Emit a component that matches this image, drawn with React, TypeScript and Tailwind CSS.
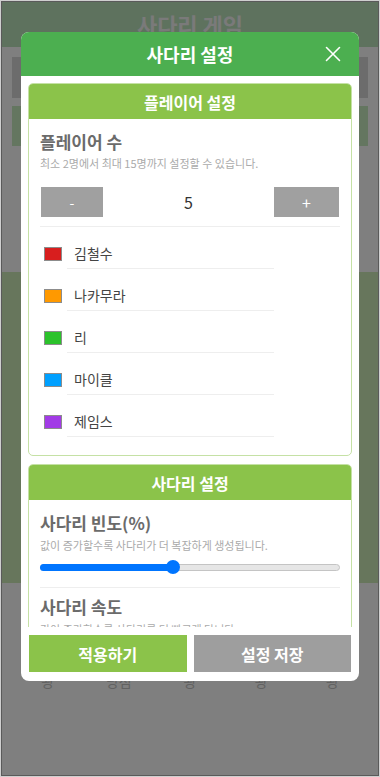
import React from "react";

const players = [
  { name: "김철수", color: "#d81e1e" },
  { name: "나카무라", color: "#ff9900" },
  { name: "리", color: "#2bc22b" },
  { name: "마이클", color: "#00a0ff" },
  { name: "제임스", color: "#a23be6" },
];

const results = ["꽝", "당첨", "꽝", "꽝", "꽝"];

function CloseIcon() {
  return (
    <svg width="16" height="16" viewBox="0 0 16 16" fill="none">
      <path d="M1.5 1.5 L14.5 14.5 M14.5 1.5 L1.5 14.5" stroke="#ffffff" strokeWidth="1.6" strokeLinecap="round" />
    </svg>
  );
}

export default function App() {
  return (
    <div
      className="relative w-[380px] h-[777px] overflow-hidden border border-[#cfcfcf] bg-white"
      style={{ fontFamily: '"Noto Sans CJK KR", "Noto Sans", sans-serif' }}
    >
      {/* background page */}
      <div className="h-full border border-[#b4b4b4] flex flex-col bg-white">
        <div className="h-[45px] bg-[#bce4bc] flex items-center justify-center text-[22px] font-bold text-[#f4f4f4]">
          사다리 게임
        </div>
        <div className="mt-[10px] mx-[10px] h-[41px] bg-[#d8d8d8]" />
        <div className="mt-[8px] mx-[10px] h-[40px] bg-[#c8ecc0]" />
        <div className="mt-[126px] h-[311px] bg-[#ceecb8]" />
        <div className="mt-[88px] mx-[10px] grid grid-cols-5 text-center text-[14px] leading-[20px] text-[#c4c4c4]">
          {results.map((r, i) => (
            <div key={i}>{r}</div>
          ))}
        </div>
      </div>

      {/* overlay */}
      <div className="absolute inset-0 bg-black/50 flex justify-center pt-[31px]">
        <div className="w-[338px] h-[649px] bg-white rounded-[8px] overflow-hidden flex flex-col">
          <div className="relative h-[44px] shrink-0 bg-[#4caf50] flex items-center justify-center">
            <span className="text-white text-[18px] font-bold">사다리 설정</span>
            <button className="absolute right-[18px] top-[14px]">
              <CloseIcon />
            </button>
          </div>

          <div className="flex-1 overflow-hidden px-[7px] pt-[7px]">
            {/* Player card */}
            <div className="border border-[#c5e1a5] rounded-[5px] overflow-hidden">
              <div className="h-[35px] bg-[#8bc34a] flex items-center justify-center text-white text-[16px] font-bold">
                플레이어 설정
              </div>
              <div className="px-[11px] pt-[12px] pb-[18px]">
                <div className="text-[17px] leading-[22px] font-bold text-[#6b6b6b]">플레이어 수</div>
                <div className="mt-[2px] text-[11px] leading-[16px] text-[#aaaaaa]">
                  최소 2명에서 최대 15명까지 설정할 수 있습니다.
                </div>
                <div className="mt-[16px] flex items-center">
                  <div className="ml-[1px] w-[62px] h-[30px] bg-[#a0a0a0] text-white text-[14px] flex items-center justify-center">
                    -
                  </div>
                  <div className="flex-1 text-center text-[16px] text-[#333333]">5</div>
                  <div className="mr-[1px] w-[65px] h-[30px] bg-[#a0a0a0] text-white text-[16px] flex items-center justify-center">
                    +
                  </div>
                </div>
                <div className="mt-[9px] h-px bg-[#eeeeee]" />
                <div className="flex flex-col gap-[12px] mt-[12px]">
                  {players.map((p) => (
                    <div key={p.name} className="flex items-center">
                      <div
                        className="ml-[4px] w-[18px] h-[14px] border border-[#8c8c8c]"
                        style={{ backgroundColor: p.color }}
                      />
                      <div className="ml-[5px] w-[207px] h-[30px] border-b border-[#eeeeee] pl-[7px] flex items-center text-[14px] text-[#444444]">
                        {p.name}
                      </div>
                    </div>
                  ))}
                </div>
              </div>
            </div>

            {/* Ladder card */}
            <div className="mt-[8px] border border-[#c5e1a5] rounded-[5px] overflow-hidden">
              <div className="h-[35px] bg-[#8bc34a] flex items-center justify-center text-white text-[16px] font-bold">
                사다리 설정
              </div>
              <div className="px-[11px] pt-[12px] pb-[18px]">
                <div className="text-[17px] leading-[22px] font-bold text-[#6b6b6b]">사다리 빈도(%)</div>
                <div className="mt-[3px] text-[11px] leading-[16px] text-[#aaaaaa]">
                  값이 증가할수록 사다리가 더 복잡하게 생성됩니다.
                </div>
                <div className="mt-[7px] relative h-[14px] flex items-center">
                  <div className="w-full h-[7px] rounded-full bg-[#e6e6e6] border border-[#c4c4c4]" />
                  <div className="absolute left-0 top-[3.5px] h-[7px] w-[133px] rounded-full bg-[#0075ff]" />
                  <div className="absolute left-[126px] top-0 w-[14px] h-[14px] rounded-full bg-[#0075ff]" />
                </div>
                <div className="mt-[13px] h-px bg-[#eeeeee]" />
                <div className="mt-[8px] text-[17px] leading-[22px] font-bold text-[#6b6b6b]">사다리 속도</div>
                <div className="mt-[3px] text-[11px] leading-[16px] text-[#aaaaaa]">
                  값이 증가할수록 사다리를 더 빠르게 탑니다.
                </div>
              </div>
            </div>
          </div>

          <div className="shrink-0 flex gap-[7px] px-[8px] pt-[8px] pb-[9px]">
            <div className="flex-1 h-[37px] bg-[#8bc34a] text-white text-[16px] font-bold flex items-center justify-center">
              적용하기
            </div>
            <div className="flex-1 h-[37px] bg-[#9e9e9e] text-white text-[16px] font-bold flex items-center justify-center">
              설정 저장
            </div>
          </div>
        </div>
      </div>
    </div>
  );
}
